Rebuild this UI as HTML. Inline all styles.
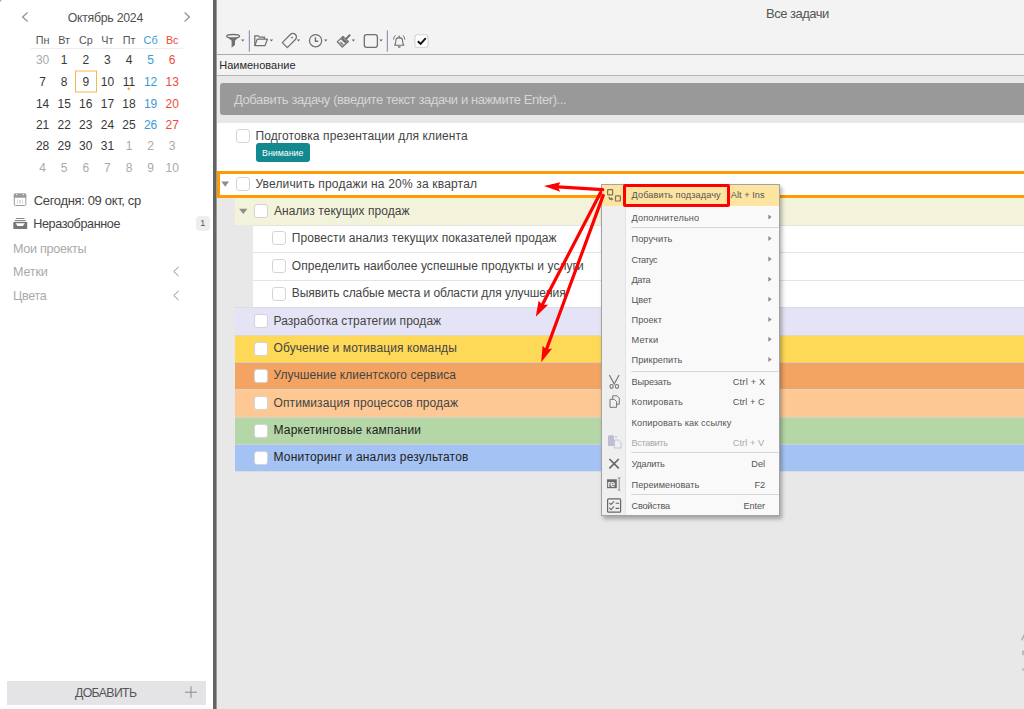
<!DOCTYPE html>
<html><head><meta charset="utf-8"><style>
html,body{margin:0;padding:0;width:1024px;height:709px;overflow:hidden;background:#e8e8e8}
body{position:relative;font-family:"Liberation Sans",sans-serif}
.t{position:absolute;white-space:pre;font-family:"Liberation Sans",sans-serif}
.c{text-align:center}
</style></head><body>
<div style="position:absolute;left:0px;top:0px;width:213px;height:709px;background:#ffffff;"></div>
<div style="position:absolute;left:7px;top:681px;width:199px;height:23.5px;background:#e4e4e6"></div>
<div style="position:absolute;left:213px;top:0px;width:3px;height:709px;background:#6a6a6a;"></div>
<svg style="position:absolute;left:0;top:0" width="213" height="709"><polyline points="27.6,12.4 22.6,16.9 27.6,21.4" fill="none" stroke="#959595" stroke-width="1.35"/><rect x="0" y="0" width="1.2" height="1.6" fill="#aaa"/><polyline points="184.6,12.4 189.4,16.9 184.6,21.4" fill="none" stroke="#959595" stroke-width="1.35"/><line x1="30.5" y1="48.5" x2="183" y2="48.5" stroke="#eeeeee" stroke-width="1"/><rect x="75.5" y="71" width="21" height="21" fill="none" stroke="#f7b553" stroke-width="1"/><circle cx="128.7" cy="88.8" r="1.2" fill="#f5a020"/><polyline points="178.5,267 173.8,271.5 178.5,276" fill="none" stroke="#8a8a8a" stroke-width="1"/><polyline points="178.5,291 173.8,295.5 178.5,300" fill="none" stroke="#8a8a8a" stroke-width="1"/><rect x="14.3" y="194.1" width="11.5" height="11.4" rx="1.2" fill="#fff" stroke="#9a9a9a" stroke-width="1"/><rect x="13.8" y="193.6" width="12.5" height="4.1" rx="1.2" fill="#9a9a9a"/><circle cx="16.8" cy="194.6" r="0.7" fill="#fff"/><circle cx="23.4" cy="194.6" r="0.7" fill="#fff"/><rect x="17" y="199.5" width="0.9" height="4.5" fill="#d8d8d8"/><rect x="22.2" y="199.5" width="0.9" height="4.5" fill="#d8d8d8"/><rect x="19.4" y="200" width="1.3" height="3.5" fill="#c8c8c8"/><rect x="15.9" y="218" width="8.6" height="1" fill="#8a8a8a"/><rect x="14.7" y="220.1" width="11" height="1.1" fill="#808080"/><path d="M13.3 222 H27.2 V228.2 Q27.2 228.9 26.5 228.9 H14 Q13.3 228.9 13.3 228.2 Z" fill="#777"/><path d="M15.6 223.2 H24.8 L23 226.1 H17.5 Z" fill="#ffffff"/><line x1="185" y1="692.2" x2="197" y2="692.2" stroke="#8a8a8a" stroke-width="1"/><line x1="191" y1="686.4" x2="191" y2="698" stroke="#8a8a8a" stroke-width="1"/></svg>
<div style="position:absolute;left:196px;top:216px;width:13.5px;height:15.199999999999989px;background:#eeeeee;border-radius:4px;"></div>
<div class="t" style="left:196px;top:219px;width:13.5px;text-align:center;font-size:9px;line-height:9px;color:#555">1</div>
<div class="t c" style="left:27.6px;top:35px;width:30px;font-size:10.8px;line-height:10.8px;color:#555">Пн</div>
<div class="t c" style="left:49.2px;top:35px;width:30px;font-size:10.8px;line-height:10.8px;color:#555">Вт</div>
<div class="t c" style="left:70.8px;top:35px;width:30px;font-size:10.8px;line-height:10.8px;color:#555">Ср</div>
<div class="t c" style="left:92.4px;top:35px;width:30px;font-size:10.8px;line-height:10.8px;color:#555">Чт</div>
<div class="t c" style="left:114.0px;top:35px;width:30px;font-size:10.8px;line-height:10.8px;color:#555">Пт</div>
<div class="t c" style="left:135.6px;top:35px;width:30px;font-size:10.8px;line-height:10.8px;color:#3a9ad9">Сб</div>
<div class="t c" style="left:157.2px;top:35px;width:30px;font-size:10.8px;line-height:10.8px;color:#ef4b3b">Вс</div>
<div class="t c" style="left:27.6px;top:54px;width:30px;font-size:12px;line-height:12px;color:#aaaaaa">30</div>
<div class="t c" style="left:49.2px;top:54px;width:30px;font-size:12px;line-height:12px;color:#383838">1</div>
<div class="t c" style="left:70.8px;top:54px;width:30px;font-size:12px;line-height:12px;color:#383838">2</div>
<div class="t c" style="left:92.4px;top:54px;width:30px;font-size:12px;line-height:12px;color:#383838">3</div>
<div class="t c" style="left:114.0px;top:54px;width:30px;font-size:12px;line-height:12px;color:#383838">4</div>
<div class="t c" style="left:135.6px;top:54px;width:30px;font-size:12px;line-height:12px;color:#3a9ad9">5</div>
<div class="t c" style="left:157.2px;top:54px;width:30px;font-size:12px;line-height:12px;color:#ef4b3b">6</div>
<div class="t c" style="left:27.6px;top:76px;width:30px;font-size:12px;line-height:12px;color:#383838">7</div>
<div class="t c" style="left:49.2px;top:76px;width:30px;font-size:12px;line-height:12px;color:#383838">8</div>
<div class="t c" style="left:70.8px;top:76px;width:30px;font-size:12px;line-height:12px;color:#383838">9</div>
<div class="t c" style="left:92.4px;top:76px;width:30px;font-size:12px;line-height:12px;color:#383838">10</div>
<div class="t c" style="left:114.0px;top:76px;width:30px;font-size:12px;line-height:12px;color:#383838">11</div>
<div class="t c" style="left:135.6px;top:76px;width:30px;font-size:12px;line-height:12px;color:#3a9ad9">12</div>
<div class="t c" style="left:157.2px;top:76px;width:30px;font-size:12px;line-height:12px;color:#ef4b3b">13</div>
<div class="t c" style="left:27.6px;top:98px;width:30px;font-size:12px;line-height:12px;color:#383838">14</div>
<div class="t c" style="left:49.2px;top:98px;width:30px;font-size:12px;line-height:12px;color:#383838">15</div>
<div class="t c" style="left:70.8px;top:98px;width:30px;font-size:12px;line-height:12px;color:#383838">16</div>
<div class="t c" style="left:92.4px;top:98px;width:30px;font-size:12px;line-height:12px;color:#383838">17</div>
<div class="t c" style="left:114.0px;top:98px;width:30px;font-size:12px;line-height:12px;color:#383838">18</div>
<div class="t c" style="left:135.6px;top:98px;width:30px;font-size:12px;line-height:12px;color:#3a9ad9">19</div>
<div class="t c" style="left:157.2px;top:98px;width:30px;font-size:12px;line-height:12px;color:#ef4b3b">20</div>
<div class="t c" style="left:27.6px;top:119px;width:30px;font-size:12px;line-height:12px;color:#383838">21</div>
<div class="t c" style="left:49.2px;top:119px;width:30px;font-size:12px;line-height:12px;color:#383838">22</div>
<div class="t c" style="left:70.8px;top:119px;width:30px;font-size:12px;line-height:12px;color:#383838">23</div>
<div class="t c" style="left:92.4px;top:119px;width:30px;font-size:12px;line-height:12px;color:#383838">24</div>
<div class="t c" style="left:114.0px;top:119px;width:30px;font-size:12px;line-height:12px;color:#383838">25</div>
<div class="t c" style="left:135.6px;top:119px;width:30px;font-size:12px;line-height:12px;color:#3a9ad9">26</div>
<div class="t c" style="left:157.2px;top:119px;width:30px;font-size:12px;line-height:12px;color:#ef4b3b">27</div>
<div class="t c" style="left:27.6px;top:140px;width:30px;font-size:12px;line-height:12px;color:#383838">28</div>
<div class="t c" style="left:49.2px;top:140px;width:30px;font-size:12px;line-height:12px;color:#383838">29</div>
<div class="t c" style="left:70.8px;top:140px;width:30px;font-size:12px;line-height:12px;color:#383838">30</div>
<div class="t c" style="left:92.4px;top:140px;width:30px;font-size:12px;line-height:12px;color:#383838">31</div>
<div class="t c" style="left:114.0px;top:140px;width:30px;font-size:12px;line-height:12px;color:#aaaaaa">1</div>
<div class="t c" style="left:135.6px;top:140px;width:30px;font-size:12px;line-height:12px;color:#aaaaaa">2</div>
<div class="t c" style="left:157.2px;top:140px;width:30px;font-size:12px;line-height:12px;color:#aaaaaa">3</div>
<div class="t c" style="left:27.6px;top:162px;width:30px;font-size:12px;line-height:12px;color:#aaaaaa">4</div>
<div class="t c" style="left:49.2px;top:162px;width:30px;font-size:12px;line-height:12px;color:#aaaaaa">5</div>
<div class="t c" style="left:70.8px;top:162px;width:30px;font-size:12px;line-height:12px;color:#aaaaaa">6</div>
<div class="t c" style="left:92.4px;top:162px;width:30px;font-size:12px;line-height:12px;color:#aaaaaa">7</div>
<div class="t c" style="left:114.0px;top:162px;width:30px;font-size:12px;line-height:12px;color:#aaaaaa">8</div>
<div class="t c" style="left:135.6px;top:162px;width:30px;font-size:12px;line-height:12px;color:#aaaaaa">9</div>
<div class="t c" style="left:157.2px;top:162px;width:30px;font-size:12px;line-height:12px;color:#aaaaaa">10</div>
<div style="position:absolute;left:216px;top:0px;width:808px;height:54px;background:#f3f3f3;"></div>
<div style="position:absolute;left:216px;top:54px;width:808px;height:1px;background:#a9a9a9;"></div>
<div style="position:absolute;left:216px;top:55px;width:808px;height:20px;background:#f3f3f3;"></div>
<div style="position:absolute;left:216px;top:75px;width:808px;height:1px;background:#b4b4b4;"></div>
<div style="position:absolute;left:216px;top:76px;width:808px;height:633px;background:#e8e8e8;"></div>
<div style="position:absolute;left:220px;top:83px;width:804px;height:32px;background:#999999;border-radius:3px 0 0 3px;"></div>
<div style="position:absolute;left:216px;top:123px;width:808px;height:48px;background:#ffffff;"></div>
<div style="position:absolute;left:216px;top:171px;width:808px;height:27px;background:#ffffff;"></div>
<div style="position:absolute;left:235px;top:198px;width:789px;height:27px;background:#f3f3dc;"></div>
<div style="position:absolute;left:253px;top:225px;width:771px;height:82px;background:#ffffff;"></div>
<div style="position:absolute;left:253px;top:225px;width:771px;height:1px;background:#e4e4e4;"></div>
<div style="position:absolute;left:253px;top:252px;width:771px;height:1px;background:#e4e4e4;"></div>
<div style="position:absolute;left:253px;top:280px;width:771px;height:1px;background:#e4e4e4;"></div>
<div style="position:absolute;left:235px;top:307px;width:789px;height:28px;background:#e4e4f6;"></div>
<div style="position:absolute;left:235px;top:335px;width:789px;height:27px;background:#fed957;"></div>
<div style="position:absolute;left:235px;top:362px;width:789px;height:27px;background:#f3a462;"></div>
<div style="position:absolute;left:235px;top:389px;width:789px;height:28px;background:#fec895;"></div>
<div style="position:absolute;left:235px;top:417px;width:789px;height:27px;background:#b5d6a7;"></div>
<div style="position:absolute;left:235px;top:444px;width:789px;height:27px;background:#a4c2f3;"></div>
<div style="position:absolute;left:235px;top:307px;width:789px;height:1px;background:rgba(215,215,215,0.7);"></div>
<div style="position:absolute;left:235px;top:335px;width:789px;height:1px;background:rgba(215,215,215,0.7);"></div>
<div style="position:absolute;left:235px;top:362px;width:789px;height:1px;background:rgba(215,215,215,0.7);"></div>
<div style="position:absolute;left:235px;top:389px;width:789px;height:1px;background:rgba(215,215,215,0.7);"></div>
<div style="position:absolute;left:235px;top:417px;width:789px;height:1px;background:rgba(215,215,215,0.7);"></div>
<div style="position:absolute;left:235px;top:444px;width:789px;height:1px;background:rgba(215,215,215,0.7);"></div>
<div style="position:absolute;left:235px;top:471px;width:789px;height:1px;background:rgba(215,215,215,0.7);"></div>
<div style="position:absolute;left:217px;top:171px;width:820px;height:27px;box-sizing:border-box;border:3px solid #ff9a00"></div>
<div style="position:absolute;left:236px;top:129.4px;width:14px;height:14px;box-sizing:border-box;border:1px solid #d4d4d4;border-radius:3px;background:#fff"></div>
<div style="position:absolute;left:236px;top:177px;width:14px;height:14px;box-sizing:border-box;border:1px solid #d4d4d4;border-radius:3px;background:#fff"></div>
<div style="position:absolute;left:254.4px;top:204.2px;width:14px;height:14px;box-sizing:border-box;border:1px solid #d4d4d4;border-radius:3px;background:#fff"></div>
<div style="position:absolute;left:272px;top:231.3px;width:14px;height:14px;box-sizing:border-box;border:1px solid #d4d4d4;border-radius:3px;background:#fff"></div>
<div style="position:absolute;left:272px;top:259px;width:14px;height:14px;box-sizing:border-box;border:1px solid #d4d4d4;border-radius:3px;background:#fff"></div>
<div style="position:absolute;left:272px;top:286.6px;width:14px;height:14px;box-sizing:border-box;border:1px solid #d4d4d4;border-radius:3px;background:#fff"></div>
<div style="position:absolute;left:254.4px;top:314.0px;width:14px;height:14px;box-sizing:border-box;border:1px solid #d4d4d4;border-radius:3px;background:#fff"></div>
<div style="position:absolute;left:254.4px;top:341.5px;width:14px;height:14px;box-sizing:border-box;border:1px solid #d4d4d4;border-radius:3px;background:#fff"></div>
<div style="position:absolute;left:254.4px;top:368.5px;width:14px;height:14px;box-sizing:border-box;border:1px solid #d4d4d4;border-radius:3px;background:#fff"></div>
<div style="position:absolute;left:254.4px;top:396.0px;width:14px;height:14px;box-sizing:border-box;border:1px solid #d4d4d4;border-radius:3px;background:#fff"></div>
<div style="position:absolute;left:254.4px;top:423.5px;width:14px;height:14px;box-sizing:border-box;border:1px solid #d4d4d4;border-radius:3px;background:#fff"></div>
<div style="position:absolute;left:254.4px;top:450.5px;width:14px;height:14px;box-sizing:border-box;border:1px solid #d4d4d4;border-radius:3px;background:#fff"></div>
<div style="position:absolute;left:256px;top:143.4px;width:53.69999999999999px;height:18.599999999999994px;background:#12898e;border-radius:3px;"></div>
<svg style="position:absolute;left:0;top:0" width="1024" height="709"><polygon points="221.4,181.5 229,181.5 225.2,186.8" fill="#8c8c8c"/><polygon points="239.1,208.8 247.4,208.8 243.25,214.1" fill="#8c8c8c"/></svg>
<svg style="position:absolute;left:0;top:0" width="1024" height="80">
<g fill="none" stroke="#707070" stroke-width="1.25">
  <!-- filter -->
  <path d="M226.8 36.6 L231.6 40.8 L231.6 47.8 L235 44.9 L235 40.8 L239.4 36.6 Z" fill="#707070" stroke="none"/>
  <ellipse cx="233.1" cy="36.2" rx="6.4" ry="1.75" fill="#f3f3f3" stroke="#707070" stroke-width="1.4"/>
  <!-- folder -->
  <path d="M254.8 45.6 V35.9 H258.3 L259.6 37.2 H264.4 V39"/>
  <path d="M254.8 45.6 L257.2 39.2 H267.4 L265 45.6 Z" stroke-linejoin="round"/>
  <!-- tag -->
  <path d="M282.3 42.6 L290.4 34.5 A3.5 3.5 0 0 1 295.4 39.5 L287.3 47.6 Z" stroke-linejoin="round"/>
  <!-- clock -->
  <circle cx="315.6" cy="40.7" r="6.1"/>
  <path d="M315.4 37.2 V41.3 H318.2" stroke-width="1.4"/>
  <!-- square -->
  <rect x="364.3" y="34.7" width="13.1" height="12.6" rx="2.2" stroke-width="1.3"/>
  <!-- bell -->
  <path d="M394.3 45.3 H404.2 M394.6 45.2 Q395.8 44 395.8 41 Q395.8 37.8 399.2 37.6 Q402.6 37.8 402.6 41 Q402.6 44 403.9 45.2" stroke-width="1.1"/>
  <path d="M397.7 46.2 A1.5 1.5 0 0 0 400.7 46.2 Z" fill="#707070" stroke="none"/>
  <circle cx="399.2" cy="36.3" r="0.8" fill="#707070" stroke="none"/>
  <path d="M393.6 39.6 Q393.7 36.9 395.4 35.4 M404.8 39.6 Q404.7 36.9 403 35.4" stroke-width="1"/>
</g>
<circle cx="292" cy="37.6" r="0.95" fill="#707070"/>
<!-- brush -->
<path d="M343 36.4 L348.4 41.5 L342.3 47 L337.3 41.9 Z" fill="#f3f3f3" stroke="#707070" stroke-width="1.3" stroke-linejoin="round"/>
<path d="M342.6 37.6 L347.2 41.6 L345.2 43.5 L340.8 39.3 Z" fill="#707070"/>
<path d="M341 41.5 L344 44.4 L342.4 45.6 L339.4 42.6 Z" fill="#8a8a8a"/>
<path d="M346.3 38.6 L349.6 35.3" stroke="#707070" stroke-width="2" stroke-linecap="round"/>
<!-- dropdown triangles -->
<g fill="#666">
  <polygon points="241,39.5 244.4,39.5 242.7,41.6"/>
  <polygon points="269.7,39.5 273.1,39.5 271.4,41.6"/>
  <polygon points="296.8,39.5 300.2,39.5 298.5,41.6"/>
  <polygon points="324.1,39.5 327.5,39.5 325.8,41.6"/>
  <polygon points="351.7,39.5 355.1,39.5 353.4,41.6"/>
  <polygon points="379.3,39.5 382.7,39.5 381,41.6"/>
</g>
<!-- separators -->
<rect x="248.8" y="30.3" width="1.2" height="21.4" fill="#9896b8"/>
<rect x="386.8" y="30.3" width="1.2" height="21.4" fill="#9896b8"/>
<!-- checkbox -->
<rect x="414.9" y="34.8" width="13.2" height="12.5" rx="2.4" fill="#ffffff" stroke="#d2d2d2" stroke-width="1.1"/>
<path d="M417.8 41.3 L420.6 43.8 L425.8 38.2" fill="none" stroke="#111" stroke-width="1.9"/>
</svg>
<div style="position:absolute;left:601px;top:184px;width:179px;height:332px;box-sizing:border-box;border:1px solid #a3a3a3;background:#f9f9f9;box-shadow:2px 3px 4px rgba(0,0,0,0.3)"></div>
<div style="position:absolute;left:602px;top:205.5px;width:23px;height:309.5px;background:#efefef;"></div>
<div style="position:absolute;left:625px;top:205.5px;width:1px;height:309.5px;background:#e3e3e3;"></div>
<div style="position:absolute;left:602px;top:185px;width:177px;height:20.5px;background:#fde4a1;"></div>
<div style="position:absolute;left:631px;top:227px;width:148px;height:1px;background:#d6d6d6;"></div>
<div style="position:absolute;left:631px;top:370.5px;width:148px;height:1.0px;background:#d6d6d6;"></div>
<div style="position:absolute;left:631px;top:452.3px;width:148px;height:1.0px;background:#d6d6d6;"></div>
<div style="position:absolute;left:631px;top:494.2px;width:148px;height:1.0px;background:#d6d6d6;"></div>
<svg style="position:absolute;left:0;top:0" width="1024" height="709"><g fill="#8a8a8a"><polygon points="768.4,214.5 771.6,217.0 768.4,219.5"/><polygon points="768.4,236.1 771.6,238.6 768.4,241.1"/><polygon points="768.4,256.5 771.6,259.0 768.4,261.5"/><polygon points="768.4,276.7 771.6,279.2 768.4,281.7"/><polygon points="768.4,296.7 771.6,299.2 768.4,301.7"/><polygon points="768.4,316.9 771.6,319.4 768.4,321.9"/><polygon points="768.4,336.8 771.6,339.3 768.4,341.8"/><polygon points="768.4,357.0 771.6,359.5 768.4,362.0"/></g><g fill="none" stroke="#7a745e" stroke-width="1.2">
      <rect x="607.6" y="189.6" width="5" height="5.2" rx="0.6"/>
      <rect x="615.5" y="195.8" width="4.9" height="5.2" rx="0.6"/>
    </g>
    <path d="M608.9 197.1 L609.9 199 H611.4" fill="none" stroke="#6e6852" stroke-width="1.3"/>
    <polygon points="611.1,197.2 613.3,199 611.1,200.8" fill="#6e6852"/>
    <!-- scissors -->
    <g fill="none" stroke="#777" stroke-width="1.15">
      <path d="M609.3 375 L614.6 384.6 M619.1 375 L613.9 384.6"/>
      <ellipse cx="611.6" cy="386.4" rx="1.6" ry="1.9"/><ellipse cx="617" cy="386.4" rx="1.6" ry="1.9"/>
    </g>
    <!-- copy -->
    <g fill="#efefef" stroke="#777" stroke-width="1">
      <path d="M612.7 395.8 H617 L619.3 398.1 V404.2 H612.7 Z"/>
      <path d="M610 399.3 H614.3 L616.6 401.6 V407.3 H610 Z"/>
    </g>
    <!-- paste disabled -->
    <g>
      <rect x="608" y="436" width="6" height="10" fill="#bdbdd3"/>
      <rect x="608.6" y="435.2" width="5" height="1.6" fill="#bdbdd3"/>
      <circle cx="616" cy="437" r="0.9" fill="#bdbdd3"/>
      <path d="M614.5 440 H618.5 L621 442.5 V448 H614.5 Z" fill="#efefef" stroke="#c4c4da" stroke-width="1"/>
    </g>
    <!-- delete X -->
    <path d="M609.4 459 L618.8 468.3 M618.8 459 L609.4 468.3" stroke="#666" stroke-width="1.7"/>
    <!-- rename -->
    <rect x="607" y="479.3" width="9.8" height="8.9" fill="#6a6a6a"/>
    <text x="607.4" y="486.9" font-family="Liberation Sans" font-size="8.6" font-weight="bold" fill="#f4f4f4" letter-spacing="-0.4">re</text>
    <path d="M619.2 478 V490 M617.8 477.8 Q619.2 478.2 620.6 477.8 M617.8 490.2 Q619.2 489.8 620.6 490.2" fill="none" stroke="#888" stroke-width="0.9"/>
    <!-- properties -->
    <rect x="607.6" y="498.9" width="13" height="13.3" rx="1" fill="none" stroke="#666" stroke-width="1.2"/>
    <path d="M609.3 502.8 L611 504.5 L614 501.3 M609.3 507.9 L611 509.6 L614 506.4" fill="none" stroke="#666" stroke-width="1.1"/>
    <path d="M615.6 503.2 H619.2 M615.6 508.4 H619.2" stroke="#666" stroke-width="1.1"/>
    </svg>
<div style="position:absolute;left:623px;top:184px;width:106.5px;height:23px;box-sizing:border-box;border:3px solid #ff0000;border-radius:2px"></div>
<div class="t" style="left:67.70px;top:12.00px;font-size:12.3px;line-height:12.3px;letter-spacing:-0.263px;color:#505050;">Октябрь 2024</div>
<div class="t" style="left:33.80px;top:194.00px;font-size:13px;line-height:13px;letter-spacing:-0.345px;color:#444;">Сегодня: 09 окт, ср</div>
<div class="t" style="left:33.20px;top:218.00px;font-size:12.6px;line-height:12.6px;letter-spacing:-0.370px;color:#444;">Неразобранное</div>
<div class="t" style="left:13.00px;top:243.00px;font-size:12.6px;line-height:12.6px;letter-spacing:-0.292px;color:#aaa;">Мои проекты</div>
<div class="t" style="left:13.00px;top:266.00px;font-size:12.6px;line-height:12.6px;letter-spacing:-0.174px;color:#aaa;">Метки</div>
<div class="t" style="left:13.00px;top:290.00px;font-size:12.6px;line-height:12.6px;letter-spacing:-0.319px;color:#aaa;">Цвета</div>
<div class="t" style="left:75.00px;top:687.00px;font-size:12.3px;line-height:12.3px;letter-spacing:-0.635px;color:#555;">ДОБАВИТЬ</div>
<div class="t" style="left:766.00px;top:7.00px;font-size:13px;line-height:13px;letter-spacing:-0.501px;color:#555;">Все задачи</div>
<div class="t" style="left:219.20px;top:60.00px;font-size:11px;line-height:11px;letter-spacing:0.006px;color:#2a2a2a;">Наименование</div>
<div class="t" style="left:234.00px;top:93.00px;font-size:13px;line-height:13px;letter-spacing:-0.408px;color:#d6d6d6;">Добавить задачу (введите текст задачи и нажмите Enter)...</div>
<div class="t" style="left:255.40px;top:130.00px;font-size:12px;line-height:12px;letter-spacing:0.110px;color:#444;">Подготовка презентации для клиента</div>
<div class="t" style="left:262.40px;top:149.00px;font-size:9.3px;line-height:9.3px;letter-spacing:0.000px;color:#ffffff;transform:scale(0.95,1.0);transform-origin:0 7px;">Внимание</div>
<div class="t" style="left:255.40px;top:178.00px;font-size:12px;line-height:12px;letter-spacing:0.175px;color:#444;">Увеличить продажи на 20% за квартал</div>
<div class="t" style="left:274.00px;top:205.00px;font-size:12px;line-height:12px;letter-spacing:0.058px;color:#444;">Анализ текущих продаж</div>
<div class="t" style="left:291.80px;top:232.00px;font-size:12px;line-height:12px;letter-spacing:0.068px;color:#444;">Провести анализ текущих показателей продаж</div>
<div class="t" style="left:291.80px;top:260.00px;font-size:12px;line-height:12px;letter-spacing:0.058px;color:#444;">Определить наиболее успешные продукты и услуги</div>
<div class="t" style="left:291.80px;top:287.00px;font-size:12px;line-height:12px;letter-spacing:-0.048px;color:#444;">Выявить слабые места и области для улучшения</div>
<div class="t" style="left:273.50px;top:315.00px;font-size:12px;line-height:12px;letter-spacing:0.051px;color:#444;">Разработка стратегии продаж</div>
<div class="t" style="left:273.50px;top:342.00px;font-size:12px;line-height:12px;letter-spacing:0.099px;color:#444;">Обучение и мотивация команды</div>
<div class="t" style="left:273.50px;top:369.00px;font-size:12px;line-height:12px;letter-spacing:0.058px;color:#444;">Улучшение клиентского сервиса</div>
<div class="t" style="left:273.50px;top:397.00px;font-size:12px;line-height:12px;letter-spacing:0.104px;color:#444;">Оптимизация процессов продаж</div>
<div class="t" style="left:273.50px;top:424.00px;font-size:12px;line-height:12px;letter-spacing:0.195px;color:#222;">Маркетинговые кампании</div>
<div class="t" style="left:273.50px;top:451.00px;font-size:12px;line-height:12px;letter-spacing:0.192px;color:#222;">Мониторинг и анализ результатов</div>
<div class="t" style="left:631.50px;top:191.00px;font-size:9.2px;line-height:9.2px;letter-spacing:0.107px;color:#555;">Добавить подзадачу</div>
<div class="t" style="left:730.80px;top:191.00px;font-size:9.2px;line-height:9.2px;letter-spacing:0.043px;color:#555;">Alt + Ins</div>
<div class="t" style="left:631.50px;top:214.00px;font-size:9.2px;line-height:9.2px;letter-spacing:0.124px;color:#555;">Дополнительно</div>
<div class="t" style="left:631.50px;top:235.00px;font-size:9.2px;line-height:9.2px;letter-spacing:0.066px;color:#555;">Поручить</div>
<div class="t" style="left:631.50px;top:256.00px;font-size:9.2px;line-height:9.2px;letter-spacing:-0.610px;color:#555;">Статус</div>
<div class="t" style="left:631.50px;top:276.00px;font-size:9.2px;line-height:9.2px;letter-spacing:-0.378px;color:#555;">Дата</div>
<div class="t" style="left:631.50px;top:296.00px;font-size:9.2px;line-height:9.2px;letter-spacing:-0.093px;color:#555;">Цвет</div>
<div class="t" style="left:631.50px;top:316.00px;font-size:9.2px;line-height:9.2px;letter-spacing:0.029px;color:#555;">Проект</div>
<div class="t" style="left:631.50px;top:336.00px;font-size:9.2px;line-height:9.2px;letter-spacing:0.153px;color:#555;">Метки</div>
<div class="t" style="left:631.50px;top:356.00px;font-size:9.2px;line-height:9.2px;letter-spacing:0.067px;color:#555;">Прикрепить</div>
<div class="t" style="left:631.50px;top:378.00px;font-size:9.2px;line-height:9.2px;letter-spacing:-0.154px;color:#555;">Вырезать</div>
<div class="t" style="left:732.70px;top:378.00px;font-size:9.2px;line-height:9.2px;letter-spacing:0.234px;color:#555;">Ctrl + X</div>
<div class="t" style="left:631.50px;top:398.00px;font-size:9.2px;line-height:9.2px;letter-spacing:0.213px;color:#555;">Копировать</div>
<div class="t" style="left:732.70px;top:398.00px;font-size:9.2px;line-height:9.2px;letter-spacing:0.077px;color:#555;">Ctrl + C</div>
<div class="t" style="left:631.50px;top:419.00px;font-size:9.2px;line-height:9.2px;letter-spacing:0.105px;color:#555;">Копировать как ссылку</div>
<div class="t" style="left:631.50px;top:439.00px;font-size:9.2px;line-height:9.2px;letter-spacing:-0.351px;color:#a9a9a9;">Вставить</div>
<div class="t" style="left:732.70px;top:439.00px;font-size:9.2px;line-height:9.2px;letter-spacing:0.077px;color:#a9a9a9;">Ctrl + V</div>
<div class="t" style="left:631.50px;top:460.00px;font-size:9.2px;line-height:9.2px;letter-spacing:-0.298px;color:#555;">Удалить</div>
<div class="t" style="left:751.30px;top:460.00px;font-size:9.2px;line-height:9.2px;letter-spacing:0.000px;color:#555;">Del</div>
<div class="t" style="left:631.50px;top:481.00px;font-size:9.2px;line-height:9.2px;letter-spacing:0.036px;color:#555;">Переименовать</div>
<div class="t" style="left:754.40px;top:481.00px;font-size:9.2px;line-height:9.2px;letter-spacing:0.000px;color:#555;">F2</div>
<div class="t" style="left:631.50px;top:502.00px;font-size:9.2px;line-height:9.2px;letter-spacing:-0.233px;color:#555;">Свойства</div>
<div class="t" style="left:743.60px;top:502.00px;font-size:9.2px;line-height:9.2px;letter-spacing:-0.125px;color:#555;">Enter</div>
<div style="position:absolute;left:213px;top:0px;width:3px;height:709px;background:#646464;"></div>
<div style="position:absolute;left:216px;top:0px;width:1px;height:709px;background:#9a9a9a;"></div>
<svg style="position:absolute;left:0;top:0" width="1024" height="709"><path d="M1021.6 640.4 L1024.4 634.4" stroke="#b4b4b4" stroke-width="1.6"/><rect x="1022" y="650.4" width="2" height="4.8" fill="#bcbcbc"/><rect x="1022.2" y="668" width="1.8" height="3" fill="#c4c4c4"/></svg>
<svg style="position:absolute;left:0;top:0" width="1024" height="709"><line x1="602.7" y1="189.6" x2="557.8" y2="186.9" stroke="#ff0000" stroke-width="3.2" stroke-linecap="round"/><polygon points="543.9,186.1 560.4,182.3 557.8,186.9 560.2,191.8" fill="#ff0000"/><line x1="600.6" y1="192.4" x2="542.3" y2="304.8" stroke="#ff0000" stroke-width="3.2" stroke-linecap="round"/><polygon points="535.8,316.7 538.6,300.7 542.3,304.8 548.2,304.7" fill="#ff0000"/><line x1="603.2" y1="195.4" x2="546.4" y2="349.5" stroke="#ff0000" stroke-width="3.2" stroke-linecap="round"/><polygon points="541.2,362.2 542.6,345.8 546.4,349.5 552.1,348.6" fill="#ff0000"/></svg>
</body></html>
